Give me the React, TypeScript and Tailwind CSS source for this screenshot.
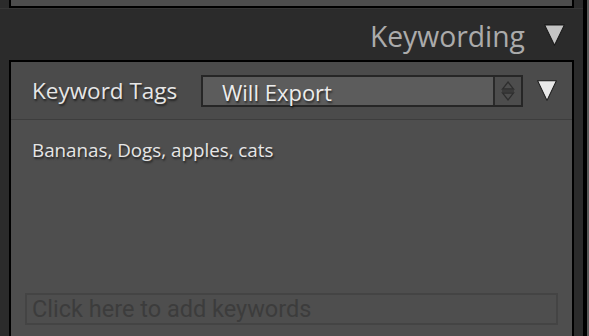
import React from 'react'

const font = { fontFamily: '"Open Sans", Lato, sans-serif' }

const DownTriangle = ({ w, h, color }: { w: number; h: number; color: string }) => (
	<svg width={w} height={h} viewBox="0 0 20 20" preserveAspectRatio="none" className="shrink-0 block">
		<polygon
			points="0.6,0.8 19.4,0.8 10,19.4"
			fill={color}
			stroke="#1a1a1a"
			strokeWidth="1"
			strokeLinejoin="round"
		/>
	</svg>
)

const Stepper = () => (
	<svg width="14" height="22" viewBox="0 0 14 22" className="shrink-0">
		<polygon points="7,2 12.5,9 1.5,9" fill="none" stroke="#2e2e2e" strokeWidth="1.3" />
		<line x1="1" y1="11" x2="13" y2="11" stroke="#2e2e2e" strokeWidth="1.2" />
		<polygon points="1.5,13 12.5,13 7,20" fill="none" stroke="#2e2e2e" strokeWidth="1.3" />
	</svg>
)

export default function App() {
	return (
		<div className="w-[589px] h-[336px] bg-[#2b2b2b] flex overflow-hidden" style={font}>
			<div className="w-[583px] flex flex-col px-[9px]">
				{/* previous panel stub */}
				<div className="h-[8px] shrink-0 bg-[#4d4d4d] border-x-2 border-b-2 border-black" />
				<div className="h-px bg-[#363636] -mx-[9px]" />

				{/* section header */}
				<div className="h-[51px] shrink-0 flex items-center justify-end gap-[19px] pr-[9px]">
					<span className="text-[28.3px] text-[#ababab] leading-none pt-[3px]">Keywording</span>
					<DownTriangle w={21} h={22} color="#c4c4c4" />
				</div>

				{/* keywording panel */}
				<div className="flex-1 flex flex-col bg-[#4e4e4e] border-x-2 border-t-2 border-black">
					<div className="h-[58px] shrink-0 flex items-center bg-[#4b4b4b] border-b border-[#3d3d3d] pl-[21px] pr-[16px]">
						<span className="text-[22.5px] text-[#e6e6e6] leading-none w-[169px] shrink-0 pt-[2px] [text-shadow:1px_2px_2px_rgba(0,0,0,0.55)]">
							Keyword Tags
						</span>
						<div className="flex h-[32px] w-[322px] shrink-0 border-2 border-[#262626] bg-[#5c5c5c]">
							<div className="flex-1 flex items-center pl-[19px] pt-[2px] text-[22px] text-[#ececec] leading-none [text-shadow:1px_2px_2px_rgba(0,0,0,0.55)]">
								Will Export
							</div>
							<div className="w-[28px] flex items-center justify-center bg-[#4d4d4d] border-l-2 border-[#2a2a2a]">
								<Stepper />
							</div>
						</div>
						<div className="ml-[14px]">
							<DownTriangle w={20} h={21} color="#e8e8e8" />
						</div>
					</div>

					<div className="flex-1 flex flex-col px-[14px] pb-[11px]">
						<div className="pl-[7px] pt-[21px] text-[18.8px] text-[#e6e6e6] leading-none [text-shadow:1px_2px_2px_rgba(0,0,0,0.55)]">
							Bananas, Dogs, apples, cats
						</div>
						<div
							className="mt-auto h-[32px] border-2 border-[#444444] flex items-center pl-[5px] pt-[2px] text-[23.5px] text-[#3c3c3c] leading-none"
							style={{ fontFamily: 'Roboto, sans-serif' }}
						>
							Click here to add keywords
						</div>
					</div>
				</div>
			</div>
			<div className="w-[4px] bg-black" />
			<div className="w-[2px] bg-[#5a5a5a]" />
		</div>
	)
}
